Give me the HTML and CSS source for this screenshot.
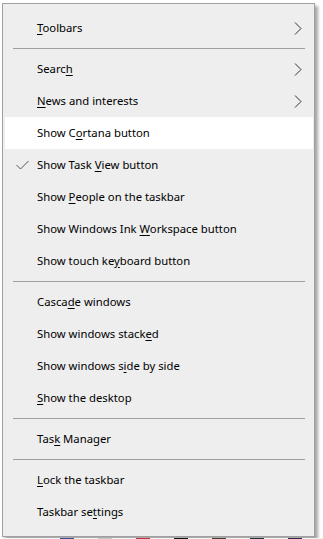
FILE: index.html
```html
<!DOCTYPE html>
<html lang="en">
<head>
    <meta charset="UTF-8">
    <title>Taskbar menu</title>
    <link rel="stylesheet" href="styles.css">
</head>
<body>
<div class="desk">
    <div class="menu">
        <div class="item"><span class="mark"></span><span class="label"><u>T</u>oolbars</span><span class="more"><svg width="8" height="13" viewBox="0 0 8 13"><path d="M1 0.5 L7 6.5 L1 12.5" fill="none" stroke="#333" stroke-width="1"/></svg></span></div>
        <div class="sep"></div>
        <div class="item"><span class="mark"></span><span class="label">Searc<u>h</u></span><span class="more"><svg width="8" height="13" viewBox="0 0 8 13"><path d="M1 0.5 L7 6.5 L1 12.5" fill="none" stroke="#333" stroke-width="1"/></svg></span></div>
        <div class="item"><span class="mark"></span><span class="label"><u>N</u>ews and interests</span><span class="more"><svg width="8" height="13" viewBox="0 0 8 13"><path d="M1 0.5 L7 6.5 L1 12.5" fill="none" stroke="#333" stroke-width="1"/></svg></span></div>
        <div class="item hover"><span class="mark"></span><span class="label">Show C<u>o</u>rtana button</span><span class="more"></span></div>
        <div class="item"><span class="mark"><svg width="13" height="10" viewBox="0 0 13 10"><path d="M0.5 5 L4.5 9 L12.5 1" fill="none" stroke="#555" stroke-width="1"/></svg></span><span class="label">Show Task <u>V</u>iew button</span><span class="more"></span></div>
        <div class="item"><span class="mark"></span><span class="label">Show <u>P</u>eople on the taskbar</span><span class="more"></span></div>
        <div class="item"><span class="mark"></span><span class="label">Show Windows Ink <u>W</u>orkspace button</span><span class="more"></span></div>
        <div class="item"><span class="mark"></span><span class="label">Show touch ke<u>y</u>board button</span><span class="more"></span></div>
        <div class="sep"></div>
        <div class="item"><span class="mark"></span><span class="label">Casca<u>d</u>e windows</span><span class="more"></span></div>
        <div class="item"><span class="mark"></span><span class="label">Show windows stack<u>e</u>d</span><span class="more"></span></div>
        <div class="item"><span class="mark"></span><span class="label">Show windows s<u>i</u>de by side</span><span class="more"></span></div>
        <div class="item"><span class="mark"></span><span class="label"><u>S</u>how the desktop</span><span class="more"></span></div>
        <div class="sep"></div>
        <div class="item"><span class="mark"></span><span class="label">Tas<u>k</u> Manager</span><span class="more"></span></div>
        <div class="sep"></div>
        <div class="item"><span class="mark"></span><span class="label"><u>L</u>ock the taskbar</span><span class="more"></span></div>
        <div class="item"><span class="mark"></span><span class="label">Taskbar se<u>t</u>tings</span><span class="more"></span></div>
    </div>
    <div class="taskbar">
        <span class="app a1"></span>
        <span class="app a2"></span>
        <span class="app a3"></span>
        <span class="app a4"></span>
        <span class="app a5"></span>
        <span class="app a6"></span>
        <span class="app a7"></span>
    </div>
</div>
</body>
</html>
```

FILE: styles.css
```css
*{
    margin: 0;
    padding: 0;
    box-sizing: border-box;
}
body{
    background: #fff;
    font-family: "Noto Sans", "Liberation Sans", sans-serif;
    font-size: 11.3px;
    color: #000;
}
.desk{
    width: 323px;
    height: 539px;
    padding: 3px 0 0 2px;
    display: flex;
    flex-direction: column;
}
.menu{
    width: 313px;
    background: #eeeeee;
    border: 1px solid #a0a0a0;
    padding: 8px 0;
    box-shadow: 3px 3px 3px rgba(0, 0, 0, 0.35);
}
.item{
    height: 32px;
    display: grid;
    grid-template-columns: 32px 1fr 28px;
    align-items: center;
    margin: 0 1px 0 2px;
}
.item.hover{
    background: #fff;
}
.label{
    padding-bottom: 2px;
}
.item u{
    text-underline-offset: 2px;
}
.mark, .more{
    display: flex;
    align-items: center;
    justify-content: center;
}
.mark{
    padding-left: 2px;
}
.more{
    padding-right: 2px;
}
.sep{
    height: 1px;
    margin: 4px 9px 4px 10px;
    background: #a0a0a0;
}
.taskbar{
    flex: 1;
    margin-top: 1px;
    display: flex;
    gap: 24px;
    padding-left: 58px;
    background: #f3f3f3;
}
.app{
    width: 14px;
    height: 4px;
}
.a1{ background: #3a4e8c; }
.a2{ background: #c9c9c9; }
.a3{ background: #c0303c; }
.a4{ background: #111; }
.a5{ background: #4a3a2a; }
.a6{ background: #1c3040; }
.a7{ background: #332050; }
```
